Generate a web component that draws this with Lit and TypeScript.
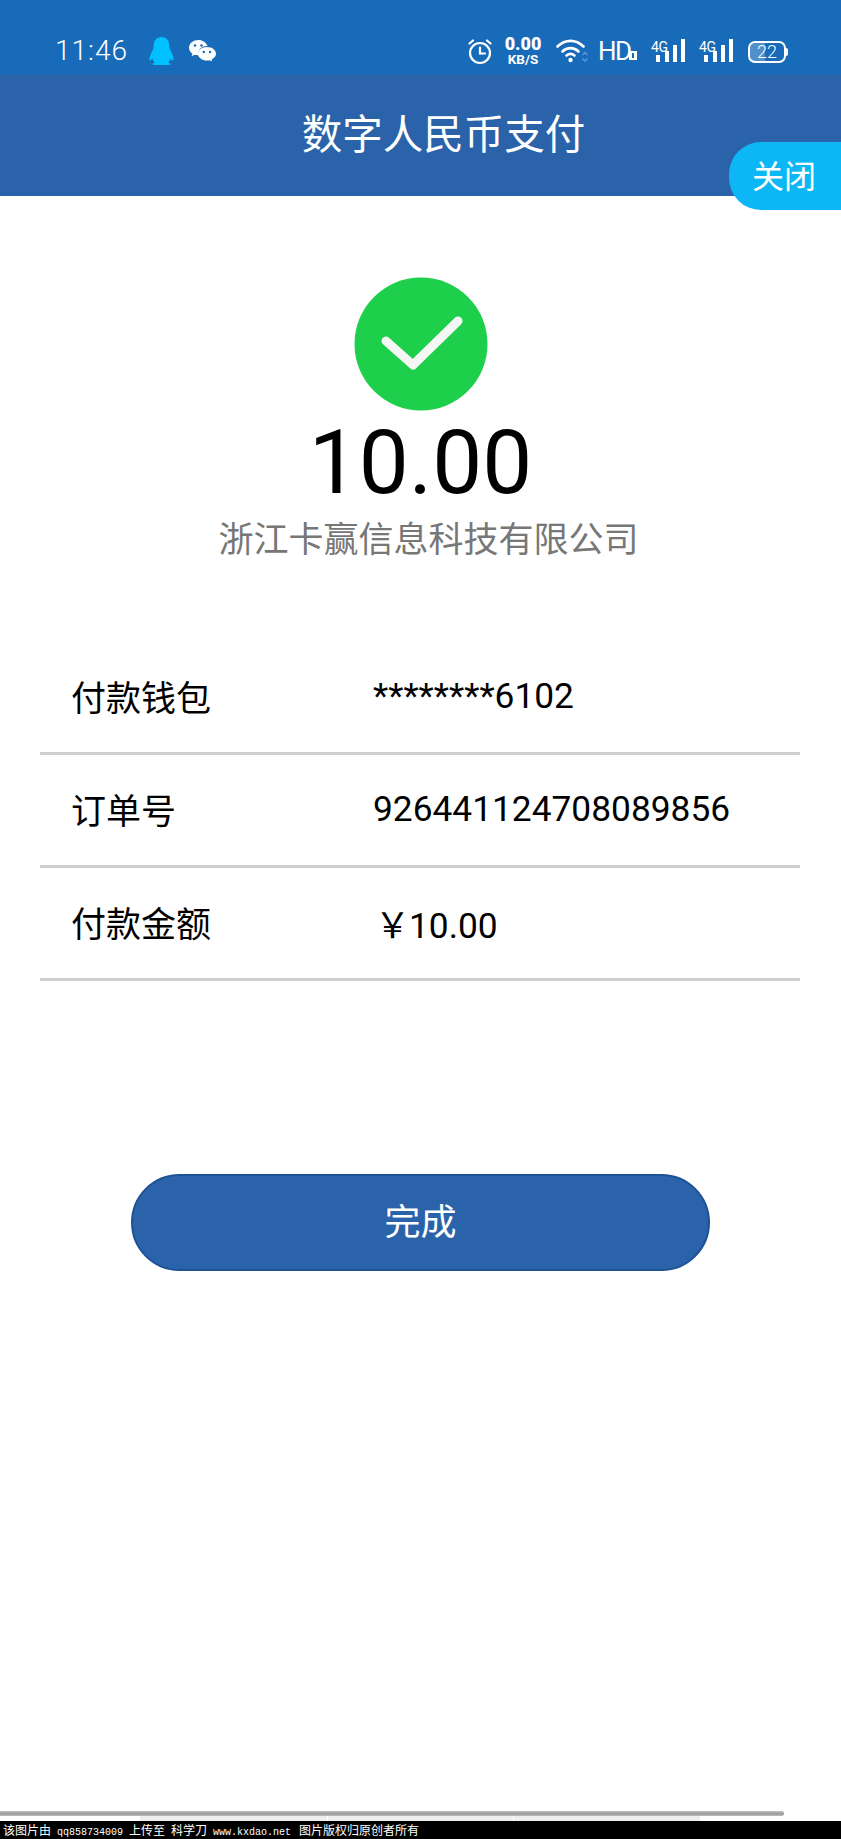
import { LitElement, html, css } from "lit";
import { customElement } from "lit/decorators.js";

const signal = () => html`<div class="sig">
  <span class="g4">4G</span>
  <svg class="bars" width="29" height="23" viewBox="0 0 29 23" fill="#fff">
    <rect x="0" y="16" width="4" height="7"/><rect x="9" y="12" width="4" height="11"/><rect x="17" y="6" width="4" height="17"/><rect x="25" y="0" width="4" height="23"/>
  </svg>
</div>`;

@customElement("app-root")
export class AppRoot extends LitElement {
  static styles = css`
    :host { display: flex; flex-direction: column; width: 841px; height: 1839px; background: #fff; font-family: Roboto, "Noto Sans CJK SC", sans-serif; overflow: hidden; }
    .status { height: 75px; flex: none; background: #176bb8; color: #fff; display: flex; align-items: flex-start; box-sizing: border-box; padding: 36px 0 0 55px; }
    .time { font-size: 28px; font-weight: 300; line-height: 30px; letter-spacing: 1px; width: 94px; }
    .qq { margin-top: 1px; margin-right: 15px; }
    .wx { margin-top: 4px; }
    .right { margin-left: auto; display: flex; align-items: flex-start; padding-right: 55px; }
    .alarm { margin-top: 3px; margin-right: 12px; }
    .speed { width: 38px; text-align: center; display: flex; flex-direction: column; align-items: center; font-weight: 700; margin-right: 14px; }
    .speed b { font-size: 18px; line-height: 15px; }
    .speed i { font-style: normal; font-size: 13.500px; line-height: 12px; margin-top: 2px; }
    .wifi { margin-top: 3px; margin-right: 10px; }
    .hd { font-size: 26px; font-weight: 400; line-height: 30px; width: 31px; letter-spacing: -1.500px; }
    .hdbox { margin-top: 15px; margin-right: 14px; }
    .sigs { display: flex; margin-right: 14px; gap: 13px; }
    .sig { position: relative; width: 35px; height: 28px; }
    .g4 { position: absolute; left: 0; top: 4px; font-size: 14px; line-height: 14px; letter-spacing: -0.3px; }
    .bars { position: absolute; left: 5px; top: 3px; }
    .battery { box-sizing: border-box; width: 38px; height: 22px; border: 2px solid #fff; border-radius: 7px; margin-top: 5px; background: linear-gradient(90deg, rgba(255,255,255,0.25) 45%, transparent 45%); font-size: 18px; line-height: 18px; font-weight: 300; text-align: center; position: relative; }
    .battery::after { content: ""; position: absolute; right: -4px; top: 5px; width: 2px; height: 8px; background: #fff; border-radius: 0 2px 2px 0; }

    .header { height: 121px; flex: none; background: #2b63aa; color: #fff; display: flex; align-items: center; justify-content: center; font-size: 40.500px; position: relative; box-sizing: border-box; padding-left: 46px; }
    .header .title { line-height: 40px; margin-top: -2px; }
    .close { position: absolute; right: 0; top: 67px; width: 112px; height: 68px; background: #0db7f5; border-radius: 32px 0 0 32px; font-size: 32px; line-height: 70px; padding-left: 23px; box-sizing: border-box; }

    .hero { display: flex; flex-direction: column; align-items: center; padding-top: 81px; }
    .check { display: block; }
    .amount { font-size: 89px; line-height: 100px; color: #000; margin-top: 2px; }
    .company { font-size: 35px; line-height: 48px; color: #777; margin-top: 4px; padding-left: 16px; }

    .rows { margin: 79px 41px 0 40px; }
    .row { display: flex; height: 111px; box-sizing: border-box; border-bottom: 3px solid #cfcfcf; padding-left: 31px; align-items: center; font-size: 35px; color: #000; margin-bottom: 2px; }
    .label { width: 302px; flex: none; padding-bottom: 5px; }
    .value { font-family: Roboto, sans-serif; font-size: 35.300px; padding-bottom: 4px; }
    .yen { font-family: "Noto Sans CJK SC", sans-serif; font-size: 35px; margin-left: 2px; margin-right: -1px; }

    .btnwrap { padding: 191px 0 0 131px; }
    .btn { box-sizing: border-box; width: 579px; height: 97px; border-radius: 49px; background: #2b63aa; border: 2px solid #1d5295; color: #fff; font-size: 36px; display: flex; align-items: center; justify-content: center; font-family: "Noto Sans CJK SC", sans-serif; padding-bottom: 7px; }

    .spacer { flex: 1; }
    .scroll { height: 5px; width: 784px; flex: none; background: linear-gradient(#c4c4c4, #9c9c9c 50%, #bbbbbb); border-radius: 0 3px 3px 0; }
    .band { height: 5px; flex: none; margin-left: 140px; width: 560px; background: linear-gradient(90deg, #eeeeee 187px, #fff 187px, #fff 188px, #eeeeee 188px, #eeeeee 373px, #fff 373px, #fff 374px, #eeeeee 374px); }
    .mark { height: 18px; flex: none; background: #000; color: #fff; font-family: "Liberation Mono", "Noto Sans CJK SC", monospace; font-size: 10px; line-height: 18px; padding-left: 3px; white-space: pre; }
    .mark .cjk { font-family: "Noto Sans CJK SC", sans-serif; font-size: 12px; }
    .mark .last { margin-left: 2px; }
  `;

  render() {
    return html`
      <div class="status">
        <span class="time">11:46</span>
        <svg class="qq" width="25" height="28" viewBox="0 0 25 28" fill="#00c0ff">
          <path d="M12.500 0C7 0 4.800 4 4.600 9.500c-.1 1.700-.6 3-1.500 4.700C1.400 17.400.4 20.500.4 23c.9.900 2 0 3-1.500.5 1.600 1.300 3 2.500 3.900-1.300.5-2.300 1-2.300 1.800 0 .5.400.8 1 .8h15.800c.6 0 1-.3 1-.8 0-.8-1-1.300-2.300-1.800 1.200-.9 2-2.300 2.500-3.900 1 1.500 2.100 2.400 3 1.500 0-2.500-1-5.600-2.700-8.800-.9-1.700-1.400-3-1.500-4.700C20.200 4 18 0 12.500 0z"/>
        </svg>
        <svg class="wx" width="27" height="23" viewBox="0 0 27 23" fill="#fff">
          <path d="M9.500 0C4.300 0 0 3.400 0 7.700c0 2.400 1.300 4.500 3.400 6l-.8 2.500 3-1.500c1.100.3 2.300.5 3.400.5h.6c-.2-.7-.3-1.300-.3-2 0-4 3.900-7.200 8.600-7.200h.7C17.100 2.600 13.600 0 9.500 0z"/>
          <path d="M18 7c-5 0-9 2.900-9 6.800s4 6.800 9 6.800c.9 0 1.900-.1 2.700-.4l2.500 1.300-.6-2.100c2.700-1.300 4.400-3.300 4.400-5.600C27 9.900 23 7 18 7z"/>
          <circle cx="6" cy="5.500" r="1.300" fill="#176bb8"/><circle cx="12.500" cy="5.500" r="1.300" fill="#176bb8"/>
          <circle cx="14.800" cy="12" r="1.200" fill="#176bb8"/><circle cx="21" cy="12" r="1.200" fill="#176bb8"/>
        </svg>
        <div class="right">
          <svg class="alarm" width="24" height="26" viewBox="0 0 24 26" fill="none" stroke="#fff" stroke-width="2.200" stroke-linecap="round">
            <circle cx="12" cy="14" r="10"/><path d="M12 8.500V14.500H17"/><path d="M1.500 4.500 5 1.500M22.500 4.500 19 1.500"/>
          </svg>
          <div class="speed"><b>0.00</b><i>KB/S</i></div>
          <svg class="wifi" width="32" height="24" viewBox="0 0 32 24" fill="none" stroke="#fff" stroke-width="2.600" stroke-linecap="round">
            <path d="M1.500 7.500C9 0 20 0 27.500 7.500"/><path d="M6.500 12.500C11 8 18 8 22.500 12.500"/><path d="M10.500 16.500C13 14.500 16 14.500 18.500 16.500"/>
            <circle cx="14.500" cy="21" r="2.200" fill="#fff" stroke="none"/>
            <path d="M27 15.500 29 13.500 31 15.500M27 20 29 22 31 20" stroke="#5d9cdc" stroke-width="1.400"/>
          </svg>
          <span class="hd">HD</span>
          <svg class="hdbox" width="8" height="9" viewBox="0 0 8 9"><rect width="8" height="9" fill="#fff"/><rect x="3" y="2" width="2" height="5" fill="#176bb8"/></svg>
          <div class="sigs">${signal()}${signal()}</div>
          <div class="battery">22</div>
        </div>
      </div>
      <div class="header">
        <span class="title">数字人民币支付</span>
        <div class="close">关闭</div>
      </div>
      <div class="hero">
        <svg class="check" width="134" height="134" viewBox="0 0 134 134">
          <circle cx="67" cy="67" r="66.500" fill="#1dcf4b"/>
          <path d="M32 64 59 88 104 44" fill="none" stroke="#f4f7f4" stroke-width="9" stroke-linecap="round" stroke-linejoin="round"/>
        </svg>
        <div class="amount">10.00</div>
        <div class="company">浙江卡赢信息科技有限公司</div>
      </div>
      <div class="rows">
        <div class="row"><span class="label">付款钱包</span><span class="value">********6102</span></div>
        <div class="row"><span class="label">订单号</span><span class="value">926441124708089856</span></div>
        <div class="row"><span class="label">付款金额</span><span class="value"><span class="yen">￥</span>10.00</span></div>
      </div>
      <div class="btnwrap"><div class="btn">完成</div></div>
      <div class="spacer"></div>
      <div class="scroll"></div>
      <div class="band"></div>
      <div class="mark"><span class="cjk">该图片由</span> qq858734009 <span class="cjk">上传至</span> <span class="cjk">科学刀</span> www.kxdao.net <span class="cjk last">图片版权归原创者所有</span></div>
    `;
  }
}
